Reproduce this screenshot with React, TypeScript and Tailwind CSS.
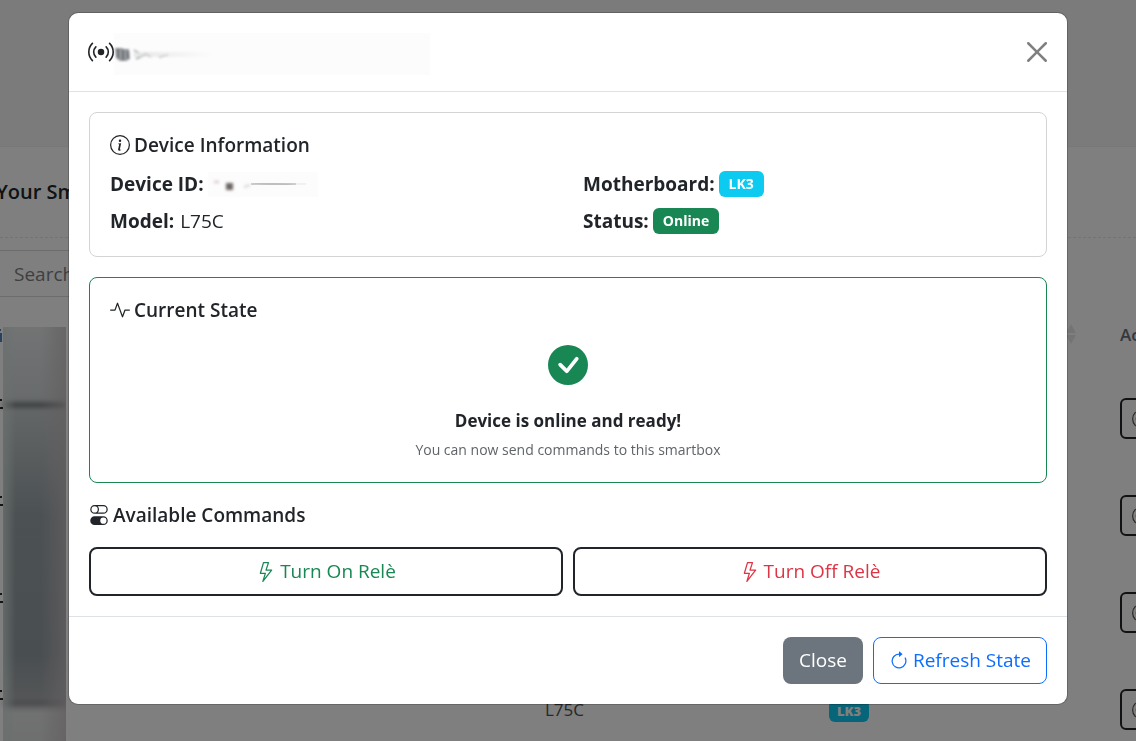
import { ReactNode } from "react";
import {
  BsActivity,
  BsArrowClockwise,
  BsBroadcast,
  BsCheckCircleFill,
  BsInfoCircle,
  BsLightning,
  BsToggles,
} from "react-icons/bs";

const rows = [
  { id: 1, model: "", board: "" },
  { id: 2, model: "", board: "" },
  { id: 3, model: "", board: "" },
  { id: 4, model: "L75C", board: "LK3" },
];

function SectionTitle({ icon, children }: { icon: ReactNode; children: ReactNode }) {
  return (
    <h5 className="flex items-center gap-1 text-[19px] leading-6 font-semibold">
      {icon}
      {children}
    </h5>
  );
}

function SortArrows() {
  return (
    <svg width="12" height="20" viewBox="0 0 12 20" className="text-[#e6e9ec]" aria-hidden="true">
      <path d="M6 0 11 9H1zM6 20 1 11h10z" fill="currentColor" />
    </svg>
  );
}

function NameSmudge() {
  return (
    <svg width="316" height="42" viewBox="0 0 316 42" aria-hidden="true">
      <defs>
        <filter id="name-blur" x="-20%" y="-60%" width="140%" height="220%">
          <feGaussianBlur stdDeviation="1.3" />
        </filter>
        <linearGradient id="name-fade">
          <stop offset="0" stopColor="#d9dadb" />
          <stop offset="1" stopColor="#fcfcfc" />
        </linearGradient>
      </defs>
      <rect width="316" height="42" fill="#fcfcfc" />
      <g filter="url(#name-blur)">
        <path d="M1 15h7l2 1h5l1 10-4 2H6l-4-3z" fill="#94979a" />
        <path d="M4 16v9M9 17v10M14 18v7" stroke="#6d7174" strokeWidth="2" />
        <path d="M20 17l5 3M22 26l10-5 5 3M45 24l9-2" stroke="#bbbdbf" strokeWidth="2" fill="none" />
        <path d="M20 19h80v5H20z" fill="url(#name-fade)" opacity=".6" />
      </g>
    </svg>
  );
}

function IdSmudge() {
  return (
    <svg width="110" height="25" viewBox="0 0 110 25" aria-hidden="true">
      <defs>
        <filter id="id-blur" x="-20%" y="-100%" width="140%" height="300%">
          <feGaussianBlur stdDeviation="1.4" />
        </filter>
      </defs>
      <rect width="110" height="25" fill="#fcfcfc" />
      <g filter="url(#id-blur)">
        <path d="M18 11h7v7h-7z" fill="#6a6564" />
        <path d="M6 10h5" stroke="#d9bcc4" strokeWidth="2" />
        <path d="M36 15l6-2" stroke="#d5d5d5" strokeWidth="2" />
      </g>
      <path d="M43 12q22-1 45 0q-22 1-45 0z" stroke="#a5aaa5" strokeWidth="1" opacity=".7" />
      <path d="M88 12h10" stroke="#e3e5e3" />
    </svg>
  );
}

function ColumnSmudge() {
  return (
    <svg
      width="66"
      height="420"
      viewBox="0 0 66 420"
      className="absolute top-[30px] left-0"
      aria-hidden="true"
    >
      <defs>
        <linearGradient id="column-tone" x1="0" y1="0" x2="0" y2="1">
          <stop offset="0" stopColor="#e4e8e9" />
          <stop offset=".16" stopColor="#d3d8d9" />
          <stop offset=".2" stopColor="#c6cccd" />
          <stop offset=".45" stopColor="#98a2a6" />
          <stop offset=".78" stopColor="#939da2" />
          <stop offset=".89" stopColor="#aaadb0" />
          <stop offset=".92" stopColor="#e2e3e3" />
          <stop offset="1" stopColor="#dcdddd" />
        </linearGradient>
        <linearGradient id="column-edge">
          <stop offset="0" stopColor="#d5e2df" stopOpacity=".8" />
          <stop offset=".2" stopColor="#d5e2df" stopOpacity="0" />
          <stop offset=".6" stopColor="#c8bfc2" stopOpacity="0" />
          <stop offset="1" stopColor="#c8bfc2" stopOpacity=".7" />
        </linearGradient>
        <filter id="column-blur" x="-5%" y="-300%" width="110%" height="700%">
          <feGaussianBlur stdDeviation="2" />
        </filter>
      </defs>
      <rect x="3" width="63" height="420" fill="url(#column-tone)" />
      <path d="M3 75h63v6H3z" fill="#646a6c" opacity=".7" filter="url(#column-blur)" />
      <path d="M3 374h63v5H3z" fill="#7c7d80" opacity=".5" filter="url(#column-blur)" />
      <rect x="3" width="63" height="420" fill="url(#column-edge)" />
      <path d="M0 3h1M0 7h1v7H0" stroke="#4b86c2" strokeWidth="2" />
      <path
        d="M0 73h2M0 81h3M0 170h2M0 178h3M0 267h2M0 275h3M0 364h2M0 372h3"
        stroke="#23262a"
        strokeWidth="2"
      />
    </svg>
  );
}

function DevicesPage() {
  return (
    <div className="h-screen overflow-hidden bg-[#fefefe]">
      <div className="h-[147px] border-b border-[#eef2f2] bg-[#f6f6f6]" />
      <div className="flex h-[91px] items-center border-b border-dashed border-[#e4e6e8]">
        <h2 className="-ml-1 text-[20px] font-semibold text-[#212529]">Your Sm</h2>
      </div>
      <input
        type="search"
        aria-label="Search"
        placeholder="Search"
        className="mt-3 block h-[47px] w-1/2 border-y border-[#d8dadd] px-3.5 text-[19px] placeholder:text-[#7c7f83]"
      />
      <div className="relative">
        <table className="w-[1240px] table-fixed border-collapse text-left">
          <colgroup>
            <col className="w-[545px]" />
            <col className="w-[284px]" />
            <col className="w-[291px]" />
            <col className="w-[120px]" />
          </colgroup>
          <thead>
            <tr className="h-[73px] text-[17px] text-[#6b7079]">
              <th />
              <th />
              <th>
                <div className="flex justify-end pr-[43px]">
                  <SortArrows />
                </div>
              </th>
              <th className="pt-0.5 font-semibold">Actions</th>
            </tr>
          </thead>
          <tbody>
            {rows.map((row) => (
              <tr key={row.id} className="h-[97px] text-[17px] text-[#4d5052]">
                <td />
                <td>{row.model}</td>
                <td>
                  {row.board && (
                    <span className="inline-block rounded-md bg-[#0dcaf0] px-2 text-[13px] leading-[22px] font-extrabold text-white">
                      {row.board}
                    </span>
                  )}
                </td>
                <td>
                  <button
                    aria-label="Open device"
                    className="flex h-[41px] w-20 items-center rounded-md border-2 border-[#212529] px-2.5 text-[#555]"
                  >
                    <BsBroadcast size={20} />
                  </button>
                </td>
              </tr>
            ))}
          </tbody>
        </table>
        <ColumnSmudge />
      </div>
    </div>
  );
}

export default function App() {
  return (
    <div className="font-['Open_Sans','Noto_Sans',sans-serif] text-[#212529]">
      <DevicesPage />
      <div className="fixed inset-0 bg-black/50" />
      <div className="fixed inset-0 overflow-hidden px-5 py-3">
        <div
          role="dialog"
          aria-modal="true"
          aria-label="Device"
          className="mx-auto max-w-[1000px] rounded-[10px] border border-black/20 bg-white bg-clip-padding"
        >
          <header className="flex h-[79px] items-center justify-between border-b border-[#dee2e6] px-5">
            <div className="flex items-center">
              <BsBroadcast size={26} className="-ml-px" />
              <div className="pt-1">
                <NameSmudge />
              </div>
            </div>
            <button aria-label="Close dialog" className="text-black/50">
              <svg width="20" height="20" viewBox="0 0 16 16" fill="currentColor">
                <path d="M.293.293a1 1 0 0 1 1.414 0L8 6.586 14.293.293a1 1 0 1 1 1.414 1.414L9.414 8l6.293 6.293a1 1 0 0 1-1.414 1.414L8 9.414l-6.293 6.293a1 1 0 0 1-1.414-1.414L6.586 8 .293 1.707a1 1 0 0 1 0-1.414z" />
              </svg>
            </button>
          </header>

          <div className="flex flex-col gap-5 p-5">
            <section className="rounded-lg border border-[#d3d4d5] p-5">
              <SectionTitle icon={<BsInfoCircle size={20} />}>Device Information</SectionTitle>
              <div className="mt-3 grid grid-cols-2 gap-x-[30px] gap-y-[7px] text-[19px] leading-[30px]">
                <p className="flex items-center gap-1">
                  <strong>Device ID:</strong>
                  <IdSmudge />
                </p>
                <p className="flex items-center gap-1">
                  <strong>Motherboard:</strong>
                  <span className="rounded-md bg-[#0dcaf0] px-2.5 text-[14px] leading-[26px] font-bold text-white">
                    LK3
                  </span>
                </p>
                <p className="flex items-center gap-1.5">
                  <strong>Model:</strong> L75C
                </p>
                <p className="flex items-center gap-1">
                  <strong>Status:</strong>
                  <span className="rounded-md bg-[#198754] px-2.5 text-[14px] leading-[26px] font-bold text-white">
                    Online
                  </span>
                </p>
              </div>
            </section>

            <section className="rounded-lg border border-[#198754] p-5">
              <SectionTitle icon={<BsActivity size={20} />}>Current State</SectionTitle>
              <div className="mt-[23px] flex flex-col items-center">
                <BsCheckCircleFill size={40} className="text-[#198754]" />
                <p className="mt-[22px] text-[17px] leading-7 font-bold">Device is online and ready!</p>
                <p className="mt-[3px] text-[14px] leading-6 text-[#5f6468]">
                  You can now send commands to this smartbox
                </p>
              </div>
            </section>

            <section>
              <SectionTitle icon={<BsToggles size={20} />}>Available Commands</SectionTitle>
              <div className="mt-5 grid grid-cols-2 gap-2.5 text-[19px]">
                <button className="flex h-[49px] items-center justify-center gap-1 rounded-lg border-2 border-[#212529] text-[#198754]">
                  <BsLightning size={20} />
                  Turn On Relè
                </button>
                <button className="flex h-[49px] items-center justify-center gap-1 rounded-lg border-2 border-[#212529] text-[#dc3545]">
                  <BsLightning size={20} />
                  Turn Off Relè
                </button>
              </div>
            </section>
          </div>

          <footer className="flex justify-end gap-2.5 border-t border-[#dee2e6] p-5 text-[19px]">
            <button className="h-[47px] rounded-lg bg-[#6c757d] px-4 text-white">Close</button>
            <button className="flex h-[47px] items-center gap-1 rounded-lg border border-[#0d6efd] px-[15px] text-[#0d6efd]">
              <BsArrowClockwise size={20} />
              Refresh State
            </button>
          </footer>
        </div>
      </div>
    </div>
  );
}
